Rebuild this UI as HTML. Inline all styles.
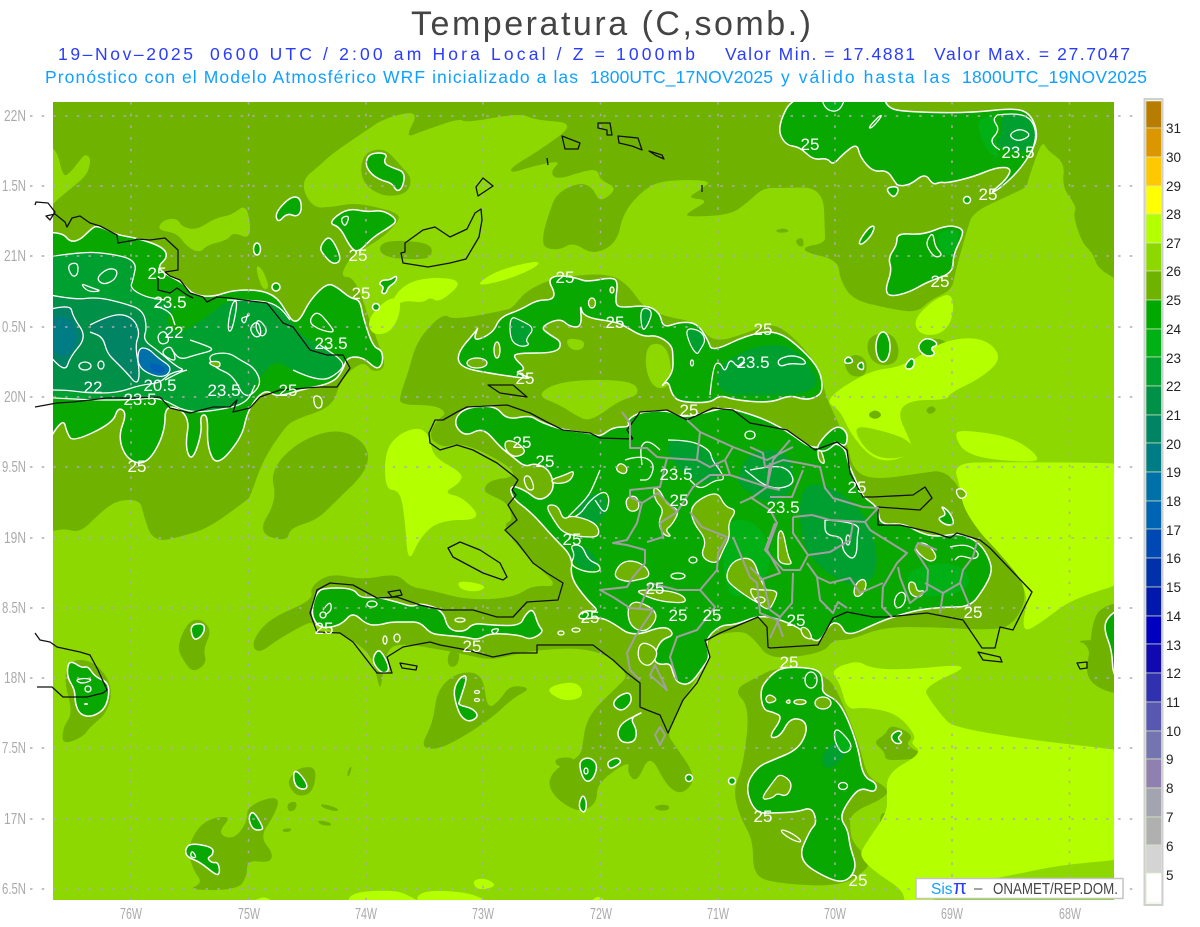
<!DOCTYPE html>
<html><head><meta charset="utf-8"><title>Temperatura</title>
<style>
html,body{margin:0;padding:0;background:#fff;width:1200px;height:927px;overflow:hidden}
svg{display:block}
text{font-family:"Liberation Sans",sans-serif;white-space:pre}
.d{fill:#6fb300}.l{fill:#8cd800}.b{fill:#b4ff00}
.g{fill:#08a800;stroke:#fff;stroke-width:1.5;stroke-linejoin:round}
.h{fill:#6fb300;stroke:#fff;stroke-width:1.3;stroke-linejoin:round}
.w{fill:none;stroke:#fff;stroke-width:1.3;stroke-linejoin:round}
.k{fill:none;stroke:#111;stroke-width:1.3;stroke-linejoin:round}
.p{fill:none;stroke:#a0a0a0;stroke-width:2;stroke-linejoin:round}
.gr{fill:none;stroke:#b0aab4;stroke-width:1.5;stroke-dasharray:2.5 9.2}
.a{fill:#aaa;font-size:15.5px}
.c{fill:#fff;font-size:17px;text-anchor:middle}
.v{fill:#222;font-size:13.5px}
</style></head><body>
<svg width="1200" height="927" viewBox="0 0 1200 927" xmlns="http://www.w3.org/2000/svg">
<rect width="1200" height="927" fill="#fff"/>
<text x="411" y="35" font-size="34" fill="#444" textLength="400" lengthAdjust="spacing">Temperatura (C,somb.)</text>
<g font-size="17.5" fill="#2a3cff">
<text x="58" y="60" textLength="135" lengthAdjust="spacing">19–Nov–2025</text>
<text x="210" y="60" textLength="485" lengthAdjust="spacing">0600 UTC / 2:00 am Hora Local / Z = 1000mb</text>
<text x="725" y="60" textLength="190" lengthAdjust="spacing">Valor Min. = 17.4881</text>
<text x="934" y="60" textLength="196" lengthAdjust="spacing">Valor Max. = 27.7047</text>
</g>
<g font-size="17.5" fill="#10a0ff">
<text x="45" y="83" textLength="533" lengthAdjust="spacing">Pronóstico con el Modelo Atmosférico WRF inicializado a las</text>
<text x="590" y="83" textLength="183" lengthAdjust="spacing">1800UTC_17NOV2025</text>
<text x="781" y="83" textLength="169" lengthAdjust="spacing">y válido hasta las</text>
<text x="962" y="83" textLength="185" lengthAdjust="spacing">1800UTC_19NOV2025</text>
</g>

<rect x="53" y="102" width="1061" height="798" fill="#8cd800"/>
<svg x="53" y="102" width="1061" height="798" viewBox="53 102 1061 798">
<!-- dark band -->
<polygon class="d" points="35,90 40,85 1130,85 1135,90 1135,288 1098,270 1093,253 1082,243 1073,215 1077,207 1062,187 1065,163 1047,150 1042,140 1028,180 1027,187 1010,195 973,212 967,230 955,273 952,290 930,300 917,313 887,308 853,300 840,280 838,260 807,253 803,247 825,243 825,233 823,187 780,188 763,188 747,203 730,215 687,217 687,213 710,200 687,198 700,190 713,180 663,180 643,190 623,213 617,243 593,255 573,242 560,250 543,248 543,233 550,210 557,193 580,182 593,188 600,203 618,188 600,180 598,170 587,170 557,180 550,172 562,160 530,167 512,173 510,168 540,150 577,123 535,120 520,113 465,123 460,118 420,132 405,138 420,110 385,118 367,130 333,153 320,165 300,182 312,208 333,207 353,203 377,207 397,213 400,220 383,237 367,247 350,257 340,277 353,277 363,300 367,313 377,340 387,367 373,373 363,360 340,380 333,407 293,420 283,430 263,460 250,497 247,500 210,527 187,535 153,543 143,513 140,500 117,500 100,513 80,533 63,528 35,536 35,300"/>
<polygon class="d" points="300,440 340,428 368,445 368,470 335,502 317,520 290,528 287,542 257,533 277,500 270,470"/>
<polygon class="d" points="513,307 527,290 557,277 610,273 630,287 643,307 667,317 697,322 713,343 747,333 770,323 790,333 820,367 825,395 837,420 847,443 853,470 873,480 923,473 943,470 960,487 963,507 980,533 997,550 1030,590 1013,627 983,630 933,627 883,627 850,640 833,640 823,653 770,660 755,640 742,630 707,637 710,657 683,700 667,733 673,743 697,777 683,795 667,787 650,753 637,783 627,773 630,760 597,783 597,803 580,813 557,800 547,783 557,767 580,757 583,743 585,727 593,710 617,687 627,677 623,670 607,655 580,648 537,650 513,655 490,660 467,655 443,650 400,643 387,650 383,673 380,693 373,657 353,640 337,633 313,623 307,623 277,640 260,653 252,647 257,633 273,617 313,600 310,587 330,573 363,580 397,573 410,587 430,590 467,600 513,598 533,585 560,587 530,560 507,533 505,523 513,520 508,503 490,495 483,490 490,480 515,477 510,467 480,450 457,443 443,448 428,437 437,420 447,413 435,405 400,405 400,395 408,373 417,340 443,313 453,320 507,310"/>
<polygon class="d" points="777,667 757,677 733,690 750,707 743,767 733,790 740,817 753,840 753,873 770,883 843,887 870,867 867,857 853,843 850,830 850,813 887,797 887,787 867,777 860,747 843,703 827,673"/>
<polygon class="d" points="873,742 885,735 890,725 905,730 913,737 905,745 925,755 922,758 900,760 885,760 885,752"/>
<polygon class="d" points="880,813 887,813 888,825 885,834 880,834"/>
<polygon class="d" points="187,623 200,618 212,630 203,650 207,663 193,673 183,660 177,647"/>
<polygon class="d" points="63,677 73,658 97,663 113,687 107,713 90,727 83,737 62,745 63,727 73,713"/>
<polygon class="d" points="290,777 300,767 317,767 313,793 297,797 288,785"/>
<polygon class="d" points="187,847 203,820 233,815 217,833 233,840 247,823 247,807 270,797 280,800 273,817 260,837 273,853 270,863 247,860 247,877 237,890 187,890 203,883 193,870"/>
<polygon class="d" points="287,803 297,801 296,810 288,812"/><polygon class="d" points="320,803 338,808 338,812 322,808"/><polygon class="d" points="317,820 330,822 332,826 320,825"/><polygon class="d" points="282,829 292,828 290,832 283,832"/><polygon class="d" points="348,770 352,765 350,775 347,777"/>
<polygon class="d" points="420,747 433,723 437,690 457,672 483,673 487,710 500,700 510,685 532,688 513,698 493,717 463,737 437,750"/>
<polygon class="d" points="450,650 460,652 458,665 450,668 447,660"/>
<polygon class="d" points="653,806 668,804 670,810 658,811"/>
<polygon class="d" points="555,758 575,757 572,768 556,766"/>
<polygon class="d" points="870,335 892,332 900,350 895,365 875,365 866,350"/>
<polygon class="d" points="920,345 930,338 947,340 947,356 935,365 920,358"/>
<polygon class="d" points="843,362 855,353 867,360 866,376 850,377"/><polygon class="d" points="905,365 915,357 918,370 908,372"/>
<polygon class="d" points="380,240 430,242 433,256 420,260 380,257"/>
<polygon class="d" points="360,170 365,152 385,148 400,165 412,178 408,192 395,196 380,195 365,185"/>
<polygon class="d" points="1130,600 1100,607 1092,625 1090,650 1085,675 1100,690 1130,696"/>
<polygon class="d" points="1073,640 1090,645 1090,680 1130,698 1130,640"/>
<polygon class="d" points="775,230 785,228 790,232 778,233"/><polygon class="d" points="795,240 803,237 804,247 798,246"/>
<!-- light holes -->
<polygon class="l" points="45,145 57,150 63,177 70,173 80,160 85,154 91,158 88,173 78,183 60,197 45,212"/>
<polygon class="l" points="247,203 252,240 233,232 228,240 207,245 200,253 187,247 177,233 157,230 163,220 177,218 182,227 197,230 215,218 232,215"/>
<polygon class="l" points="255,265 262,268 270,288 262,290"/>
<polygon class="l" points="563,380 633,380 640,395 620,400 590,422 575,415 560,405 535,395"/>
<polygon class="l" points="647,343 668,345 673,385 655,390 645,370"/>
<polygon class="l" points="565,338 585,340 583,350 570,350"/>
<!-- bright -->
<polygon class="b" points="830,670 857,660 870,668 903,670 977,663 923,687 930,700 943,717 953,727 1030,740 1130,751 1135,756 1135,852 1130,859 1060,865 1013,875 960,885 925,905 905,905 903,890 875,872 860,857 863,847 887,813 887,797 887,773 923,753 910,743 917,737 897,713 863,707 847,710 840,683"/>
<polygon class="b" points="823,400 870,370 903,367 943,340 983,337 1003,357 983,377 950,393 947,400 910,400 897,413 910,440 913,453 890,462 870,457 850,433 840,410"/>
<polygon class="b" points="913,320 933,300 953,292 953,320 940,335 920,335"/>
<polygon class="b" points="953,463 1000,462 1130,463 1135,468 1135,575 1130,581 1070,600 1045,620 1020,635 1030,590 997,550 980,533 963,507 960,487"/>
<polygon class="b" points="953,433 965,430 1013,437 1040,457 1033,463 967,457"/>
<polygon class="b" points="385,450 400,433 420,427 430,437 433,457 463,473 460,483 443,493 463,497 483,520 440,520 420,537 408,565 405,520 400,490 385,490"/>
<polygon class="b" points="385,312 407,278 467,278 440,303 430,297 423,303 403,300"/>
<polygon class="b" points="473,287 497,270 540,260 537,267 507,280"/>
<polygon class="b" points="367,320 385,300 400,297 400,315 390,333 372,335"/>
<polygon class="b" points="543,688 577,680 585,697 563,702"/>
<polygon class="b" points="457,580 487,585 480,592 460,590"/>
<polygon class="b" points="473,880 485,878 497,885 485,890 475,888"/><polygon class="b" points="415,905 420,890 470,892 493,905"/><polygon class="b" points="587,908 598,893 610,908"/><polygon class="b" points="243,908 265,894 277,908"/><polygon class="b" points="347,908 350,892 395,890 410,896 430,908"/>
<polygon class="l" points="852,425 880,430 910,440 915,455 885,460 865,450"/>
<polygon class="l" points="900,412 930,400 970,402 985,425 950,432 915,428"/>
<polygon class="d" points="867,415 875,409 883,415 875,420"/><polygon class="d" points="925,410 932,405 937,410 930,415"/>
<!-- Cuba -->
<polygon class="g" points="40,232 63,233 70,242 80,240 90,230 97,225 117,235 137,238 163,247 168,257 157,267 167,275 183,283 193,295 213,297 233,290 260,290 277,297 287,313 293,322 300,320 310,300 327,283 337,287 350,298 360,300 363,317 373,347 382,350 383,363 377,370 363,357 347,357 343,370 333,383 300,390 277,397 267,390 257,397 247,413 242,437 217,467 207,447 208,415 200,415 202,433 192,462 185,447 190,415 165,403 165,433 147,465 127,460 118,437 127,413 118,407 113,423 73,442 67,433 63,417 40,455"/>
<polygon fill="#00a030" points="40,258 80,252 107,253 137,260 133,280 130,288 145,297 165,300 175,310 165,320 175,335 195,325 213,312 227,300 263,300 280,307 300,335 320,345 345,362 340,372 320,383 293,370 275,360 262,375 255,385 247,403 220,410 187,413 160,397 133,400 83,400 40,397"/>
<polyline class="w" points="40,258 80,252 107,253 137,260 133,280 130,288 145,297 165,300"/>
<polyline class="w" points="40,397 83,400 133,400 160,397 187,413 220,410 247,403 255,385"/>
<polyline class="w" points="293,370 320,383 340,372 345,362 320,345"/>
<polyline class="w" points="227,300 263,300 280,307 290,320"/>
<polygon fill="#009048" points="40,293 73,300 97,297 123,303 143,310 147,328 143,340 157,350 177,367 185,370 170,373 160,383 140,385 117,393 87,393 67,390 40,390"/>
<polyline class="w" points="40,293 73,300 97,297 123,303 143,310 147,328 143,340 157,350 177,367 185,370 170,373 160,383 140,385 117,393 87,393 67,390 40,390"/>
<polygon fill="#008464" points="40,312 70,303 73,317 87,337 70,357 65,373 40,345"/>
<polyline class="w" points="40,312 70,303 73,317 87,337 70,357 65,373 40,345"/>
<polygon fill="#008464" points="90,325 113,313 133,317 140,333 135,345 140,373 137,385 127,373 117,363 107,353 103,337 90,332"/>
<polyline class="w" points="90,325 113,313 133,317 140,333 135,345 140,373 137,385 127,373 117,363 107,353 103,337 90,332"/>
<polygon fill="#007c84" points="45,320 70,315 80,340 65,360 45,345"/>
<polygon fill="#0070a8" stroke="#fff" stroke-width="1.2" points="138,348 148,348 158,358 173,368 163,379 138,369"/>
<polygon fill="#0060b8" points="150,362 162,366 166,370 160,374 150,370"/>
<polygon class="w" points="157,335 165,330 170,342 160,345"/>
<polyline class="w" points="165,380 180,372 187,370"/>
<ellipse class="w" cx="85" cy="366" rx="6" ry="4"/><ellipse class="w" cx="101" cy="365" rx="3" ry="4"/>
<polygon class="w" points="67,265 78,262 78,275 72,277"/>
<polygon class="w" points="96,278 108,268 118,270 115,280 103,285"/>
<polygon class="w" points="80,283 92,288 102,291 88,292"/>
<polyline class="w" points="155,306 170,310 175,325"/>
<polyline class="w" points="190,340 205,345 215,350 195,355 180,360 172,350"/>
<polygon class="w" points="160,353 170,345 175,355 175,362"/>
<polygon class="w" points="207,355 228,352 240,360 255,368 262,385 245,400 233,375 215,368"/>
<polygon class="h" points="207,362 220,361 220,367 215,367"/>
<polygon class="w" points="232,302 238,300 232,332 227,330"/>
<polygon class="w" points="245,325 248,312 250,316 240,318"/>
<polygon class="w" points="249,328 258,320 262,335 255,338"/>
<polygon class="w" points="258,318 268,330 262,338 255,328"/>
<polygon class="w" points="308,322 317,310 330,325 335,333 320,330"/>
<polygon class="h" points="313,395 322,397 322,408 315,408"/>
<polygon class="g" points="382,280 390,280 397,275 396,282 388,287 386,294 381,293 384,287 379,284"/>
<!-- northern islets -->
<polygon class="g" points="365,163 370,153 388,153 383,163 393,168 405,172 403,187 397,192 392,183 380,180 370,173"/>
<polygon class="g" points="275,213 290,197 300,197 302,210 297,217 287,213 278,223"/>
<ellipse class="g" cx="257" cy="249" rx="3.5" ry="6"/>
<polygon class="g" points="320,247 327,237 333,240 342,260 333,265 322,253"/>
<polygon class="g" points="328,223 347,208 367,212 383,210 398,220 390,227 373,237 358,253 350,247 340,227"/>
<polygon class="w" points="340,218 350,215 345,228"/>
<circle class="g" cx="276" cy="287" r="4"/><circle class="g" cx="376" cy="307" r="3.5"/>
<!-- NE large -->
<polygon class="g" points="795,92 777,127 785,145 800,147 813,160 827,158 833,165 842,155 857,143 860,157 873,172 887,170 895,182 898,186 910,185 925,173 933,185 940,182 947,183 973,177 997,167 1012,168 1006,180 990,193 998,190 1018,172 1033,150 1038,133 1030,113 1013,108 970,113 907,112 887,108 883,92"/>
<polygon fill="#00a030" points="1000,117 1013,113 1030,117 1036,133 1031,152 1003,150 995,143 1003,132"/>
<polygon fill="#00b014" points="975,118 1000,116 995,143 1000,160 985,150"/>
<polyline class="w" points="997,115 1013,113 1030,117 1037,133 1032,152"/>
<polyline class="w" points="1000,150 988,143 1000,130 993,120 997,115"/>
<polygon class="w" points="1008,135 1020,128 1032,135 1018,142"/>
<polygon class="w" points="868,128 880,115 882,116 872,128"/>
<polygon fill="#00b014" stroke="#fff" stroke-width="1.2" points="820,92 825,110 840,112 847,92"/>
<polygon class="g" points="885,188 898,186 898,193 893,198"/>
<polygon class="g" points="885,290 892,270 888,258 897,245 897,233 923,235 947,225 962,228 963,235 953,255 953,273 927,282 910,292 890,297"/>
<polygon fill="#00b014" points="935,232 962,228 953,255 942,255"/>
<polygon class="w" points="927,240 933,232 935,247 943,255 935,258 927,247"/>
<polygon class="g" points="858,243 868,228 875,225 872,235 862,245"/>
<circle class="g" cx="967" cy="200" r="3.5"/>
<ellipse class="g" cx="883" cy="347" rx="7" ry="15"/>
<polygon class="g" points="918,345 925,338 934,340 938,345 930,348 936,354 928,357 920,352"/>
<polygon class="g" points="844,360 849,356 854,362 846,364"/><polygon class="g" points="857,365 863,361 864,370 859,369"/><polygon class="g" points="905,365 912,357 915,363 912,369 906,369"/>
<!-- central north -->
<polygon class="g" points="457,353 477,330 478,327 473,342 493,333 500,317 520,310 537,300 552,300 555,293 548,280 557,275 577,278 587,282 613,277 618,283 615,303 620,308 647,305 660,313 663,328 680,322 697,323 708,340 712,352 747,335 777,330 803,350 820,370 823,390 817,397 805,400 790,395 770,403 735,400 720,395 710,403 680,402 672,395 668,380 660,388 673,373 673,357 672,345 657,335 643,337 623,325 615,322 583,317 580,303 582,327 570,327 560,318 540,327 550,335 562,342 557,353 517,353 513,357 527,370 513,372 537,380 487,373 460,367"/>
<polygon fill="#00a030" stroke="#fff" stroke-width="1.2" points="510,316 520,320 535,328 525,340 530,345 520,347 510,340"/>
<polygon fill="#00a030" stroke="#fff" stroke-width="1.2" points="640,307 653,310 648,325 642,332"/>
<polygon fill="#00a030" stroke="#fff" stroke-width="1.2" points="685,328 700,330 706,340 700,350 697,355 690,345"/>
<polygon fill="#00a030" points="715,370 735,355 760,345 790,345 810,365 820,385 800,395 760,395 720,395"/>
<polyline class="w" points="710,395 713,365 720,362 725,373 730,358 738,368 745,362"/>
<polygon class="w" points="777,360 790,355 803,358 807,365 790,363 780,367"/>
<ellipse class="h" cx="477" cy="363" rx="10" ry="5"/><ellipse class="h" cx="497" cy="350" rx="3" ry="8"/><ellipse class="h" cx="592" cy="303" rx="3.5" ry="5"/><ellipse class="h" cx="612" cy="290" rx="2" ry="3"/><ellipse class="w" cx="692" cy="363" rx="1.5" ry="3"/>
<!-- main island -->
<polygon class="g" points="453,423 463,408 495,405 507,420 530,415 540,422 563,430 590,433 600,437 613,427 630,427 627,420 640,412 667,410 683,418 707,412 723,408 737,410 767,420 790,433 813,450 830,442 845,447 848,463 857,483 863,497 878,507 880,525 903,523 920,533 937,537 960,533 980,543 990,560 992,573 983,590 970,607 943,607 917,610 893,617 877,623 847,637 840,623 830,623 818,645 803,630 782,620 760,615 735,625 720,625 705,640 710,657 703,667 690,685 677,683 673,673 670,663 660,665 653,660 660,640 675,635 665,625 633,637 613,623 600,617 577,620 582,610 600,612 587,600 570,577 573,557 553,537 532,513 512,498 510,485 525,490 540,502 555,490 550,470 535,463 525,467 513,457 500,447 483,427 465,437"/>
<polygon fill="#00a030" points="668,440 690,440 720,460 720,478 700,485 680,470 668,455"/>
<polygon fill="#00a030" points="750,450 790,450 795,490 770,505 745,490 735,480"/>
<polygon fill="#00a030" points="800,480 840,490 870,520 880,570 860,590 820,570 800,540"/>
<polygon fill="#00a030" points="580,500 600,490 610,510 590,530 575,520"/>
<polygon fill="#00a030" points="570,545 590,548 600,565 590,572 575,565"/>
<polygon fill="#00b014" points="720,520 760,520 775,570 740,600 725,590"/>
<polygon fill="#00b014" points="900,570 960,560 975,590 920,600"/>
<polygon class="w" points="570,545 582,545 588,560 600,565 600,572 585,572 570,565 575,555"/>
<polyline class="w" points="600,470 592,490 585,500 575,510 565,520 580,515 590,500 605,490 610,500 605,515 595,500"/>
<polyline class="w" points="668,440 690,440 710,450 712,460 720,470 725,480 715,480 700,490 690,480"/>
<polyline class="w" points="625,460 640,455 655,463 650,480 640,480"/>
<polyline class="w" points="750,470 775,465 790,470 795,485 770,490 745,470"/>
<polygon class="h" points="545,505 558,505 563,520 572,515 597,523 600,537 582,537 563,533 555,522"/>
<polygon class="h" points="690,505 717,490 725,507 737,510 728,523 730,537 723,550 717,565 700,557 707,540 693,523"/>
<polygon class="h" points="620,563 633,560 647,567 650,577 637,580 627,582 613,577"/>
<polygon class="h" points="633,590 665,590 683,595 687,603 665,602 650,598"/>
<polygon class="h" points="725,577 733,560 753,557 760,580 773,600 763,607 733,587"/>
<polygon class="h" points="627,607 637,600 660,613 647,633 630,627"/>
<polygon class="h" points="653,487 660,490 667,505 680,510 672,525 665,530 672,537 663,535 658,522 664,510 655,500"/>
<polygon class="h" points="778,532 783,530 788,557 793,565 778,563 778,550"/>
<polygon class="h" points="917,543 927,543 938,557 930,563 915,550"/>
<polygon class="h" points="908,582 915,582 917,592 925,590 920,598 910,595"/>
<polygon class="h" points="750,588 757,590 778,590 775,600 768,612 752,597"/>
<polygon class="h" points="800,627 808,628 813,640 803,637"/>
<polygon class="h" points="640,640 660,650 650,668 637,660"/>
<polygon class="h" points="505,440 517,442 527,452 515,458 505,450"/>
<polygon class="h" points="523,477 530,475 535,490 527,490"/>
<polygon class="h" points="550,480 565,475 575,470 570,482 555,484"/>
<polygon class="h" points="620,462 628,468 625,475 615,470"/>
<polygon class="h" points="625,498 637,495 640,510 628,512"/>
<polyline class="w" points="825,520 860,522 857,537 857,553 852,560 842,550 843,537 825,535 825,520"/>
<polyline class="w" points="950,547 965,543 980,553 975,560 960,555 955,560"/>
<ellipse class="w" cx="760" cy="600" rx="5" ry="3"/><ellipse class="w" cx="678" cy="576" rx="7" ry="3"/><ellipse class="w" cx="693" cy="560" rx="4" ry="3"/><ellipse class="w" cx="750" cy="435" rx="5" ry="4"/><ellipse class="w" cx="900" cy="600" rx="5" ry="8" transform="rotate(20 900 600)"/><ellipse class="h" cx="860" cy="588" rx="5" ry="9" transform="rotate(25 860 588)"/><ellipse class="w" cx="848" cy="540" rx="2" ry="5"/><ellipse class="w" cx="576" cy="630" rx="4" ry="2"/><ellipse class="w" cx="561" cy="633" rx="3" ry="2"/>
<polygon class="h" points="818,445 823,455 825,465 818,460"/>
<polyline class="w" points="660,450 650,440 640,445 642,465"/>
<polygon class="g" points="838,425 848,433 846,447 837,442 826,452 815,450 825,435"/>
<polygon class="h" points="955,490 962,488 968,495 960,500"/>
<polygon class="g" points="940,505 950,512 955,525 945,525 937,518 947,515"/>
<!-- southern peninsula -->
<polygon class="g" points="313,603 317,593 323,588 353,588 360,598 377,597 397,602 413,607 420,603 443,610 448,630 465,632 473,623 490,625 520,626 525,615 533,608 538,625 544,632 530,640 520,635 490,633 478,640 465,637 440,635 430,633 420,622 407,622 390,622 380,625 367,625 353,612 343,623 333,627 320,628 312,617"/>
<polyline class="w" points="323,610 330,600 332,610 325,615"/><circle class="w" cx="323" cy="615" r="3"/><ellipse class="w" cx="372" cy="604" rx="5" ry="3"/><ellipse class="w" cx="385" cy="640" rx="2" ry="4"/><ellipse class="w" cx="397" cy="638" rx="3" ry="4"/>
<polygon class="g" points="377,650 382,652 390,668 385,674 378,670 372,660"/>
<polygon class="w" points="490,630 500,628 495,635"/>
<ellipse class="w" cx="460" cy="620" rx="5" ry="2"/>
<!-- beata ridge -->
<polygon class="g" points="780,668 800,667 820,670 823,683 822,693 837,700 847,717 858,747 863,777 877,783 875,793 860,787 847,803 840,818 848,830 850,847 857,867 847,882 830,880 797,860 810,830 817,823 812,807 797,812 773,813 755,813 745,787 757,767 773,760 797,750 807,733 805,720 790,718 780,737 768,738 783,717 773,712 763,710 760,690 768,678"/>
<polygon fill="#00a030" points="820,755 842,735 848,755 826,772"/>
<ellipse class="w" cx="811" cy="680" rx="6" ry="8"/>
<ellipse class="h" cx="823" cy="703" rx="8" ry="6"/>
<ellipse class="h" cx="800" cy="702" rx="6" ry="2.5"/>
<polygon class="h" points="765,698 770,694 778,700 768,704"/>
<polygon class="h" points="785,702 790,699 790,704"/>
<polygon fill="#00b014" stroke="#fff" stroke-width="1.3" points="834,730 840,730 854,747 843,755 835,743"/>
<polygon class="h" points="760,800 773,782 780,773 793,783 787,797 777,793 773,798"/>
<ellipse class="w" cx="843" cy="786" rx="4.5" ry="3.5"/>
<ellipse class="h" cx="791" cy="836" rx="11" ry="2.5" transform="rotate(30 791 836)"/>
<polygon class="g" points="890,736 898,730 903,733 897,738 903,743 895,744"/>
<!-- west / south islets -->
<polygon class="g" points="68,663 73,662 82,668 88,666 95,677 110,683 107,707 93,717 80,715 75,703 75,690 67,677"/>
<polygon class="w" points="75,680 85,678 93,680 82,684"/><circle class="w" cx="88" cy="689" r="3"/><ellipse fill="#fff" cx="86" cy="704" rx="2" ry="1"/>
<polygon class="g" points="190,625 203,623 205,630 200,638 193,640"/>
<polygon class="g" points="293,772 298,771 308,785 305,790 295,787"/>
<polygon class="g" points="248,818 253,810 263,827 262,830 253,830"/>
<polygon class="g" points="185,850 190,843 213,847 213,855 207,858 212,863 218,862 220,872 217,876 200,862 187,857"/>
<polygon class="w" points="192,850 197,858 190,857"/>
<polygon class="g" points="453,690 460,677 468,675 460,700 458,705 472,708 479,716 470,722 462,718 457,708"/>
<ellipse class="w" cx="477" cy="692" rx="2.5" ry="1.5"/><ellipse class="w" cx="477" cy="700" rx="2.5" ry="1.5"/>
<polygon class="g" points="613,702 620,695 630,692 632,702 623,711 615,708"/>
<polygon class="g" points="618,730 623,722 637,715 643,712 630,718 637,730 635,742 623,743 618,737"/>
<polygon class="g" points="580,760 590,757 598,765 593,780 585,782 580,770"/><ellipse class="w" cx="586" cy="771" rx="2" ry="3"/>
<polygon class="g" points="607,762 617,757 622,762 613,768 609,768"/>
<polygon class="g" points="579,803 583,794 587,803 585,813 580,810"/>
<circle class="g" cx="689" cy="778" r="3.5"/><circle class="g" cx="732" cy="781" r="3.5"/>
<polygon class="g" points="1125,605 1107,617 1104,630 1112,650 1113,677 1125,680"/>
</svg>
<!-- grid lines extended past the plot -->
<path class="gr" d="M30 116H1140M30 186H1140M30 256H1140M30 327H1140M30 397H1140M30 467H1140M30 538H1140M30 608H1140M30 678H1140M30 748H1140M30 819H1140M30 889H1140M131 102V906M248.5 102V906M366 102V906M483 102V906M600.5 102V906M718 102V906M835 102V906M952 102V906M1069.5 102V906"/>
<!-- coastlines -->
<polyline class="k" points="35,205 36,202 48,203 55,212 50,220 46,216 55,214 65,222 67,227 72,218 80,216 90,223 100,226 117,235 118,243 135,240 137,239 150,240 165,238 178,250 178,270 165,272 170,276 180,280 190,293 203,297 207,302 217,297 230,298 243,300 267,303 283,323 293,327 310,350 327,355 343,355 350,368 337,387 320,387 280,390 260,397 250,408 233,412 237,400 230,407 213,407 190,413 170,408 160,397 133,398 107,398 90,400 73,402 57,403 35,407"/>
<polyline class="k" points="158,278 158,290 170,293 177,288 187,295 193,298"/>
<polygon class="k" points="476,187 483,178 493,186 478,196"/>
<polygon class="k" points="405,243 423,230 435,227 450,237 467,229 475,213 481,209 482,220 479,237 466,259 450,263 428,267 403,263 401,253 405,252"/>
<polygon class="k" points="562,136 580,143 578,149 565,149"/>
<polygon class="k" points="598,123 610,123 612,135 607,135 607,130 598,128"/>
<polygon class="k" points="618,136 638,138 642,150 632,146 619,143"/>
<polygon class="k" points="649,151 662,155 664,159 655,155"/>
<polyline class="k" points="547,158 548,165"/><polyline class="k" points="702,185 702,192"/>
<polygon class="k" points="488,385 513,385 527,397 500,393"/>
<polyline class="k" points="633,439 600,438 590,433 563,430 547,422 530,413 507,405 467,407 457,412 443,420 435,420 429,433 430,443 440,450 457,445 473,450 497,463 515,477 518,480 512,490 516,495 508,505 517,520 505,530 517,542 533,563 547,573 563,583 558,600 527,602 513,617 497,617 473,610 443,610 420,605 397,597 377,598 353,585 330,583 317,590 310,613 317,632 340,633 353,642 377,673 392,673 387,657 403,647 430,642 440,645 467,650 493,657 513,653 537,653 537,645 593,645 613,660 627,673 640,683 640,707 647,710 660,715 668,733 683,700 697,683 710,657 705,640 707,640 720,633 758,617 767,627 768,647 770,648 818,645 833,618 847,612 873,617 887,617 927,613 963,620 982,648 995,648 1000,627 1013,630 1032,592 990,548 980,540 957,533 950,538 935,533 900,525 878,525 878,507 920,510 932,498 925,487 913,495 873,497 863,497 850,473 847,450 837,442 815,450 787,430 750,423 733,410 713,408 687,420 667,410 640,412 627,430 633,439"/>
<polygon class="k" points="978,652 1000,657 1002,662 983,660"/>
<polygon class="k" points="448,548 460,542 480,550 500,563 507,577 503,580 483,573 453,557"/>
<polygon class="k" points="388,592 400,590 402,595 392,597"/>
<polygon class="k" points="400,663 417,666 416,670 402,668"/>
<polyline class="k" points="35,633 40,640 50,642 57,647 80,652 90,655 98,670 107,690 103,693 87,697 75,697 63,697 52,687 37,687"/>
<polygon class="k" points="1077,663 1087,662 1087,668 1080,669"/>
<!-- province lines -->
<polyline class="p" points="622,412 630,423 630,448 647,448 657,457 667,458 660,487 630,490 630,497 642,503 637,523 627,540 613,543 627,545 645,550 645,563 633,577 627,587 600,590 613,597 630,608 653,610 635,637 627,653 630,670 640,680"/>
<polyline class="p" points="687,420 700,432 697,460 710,467 725,460 733,447 700,432"/>
<polyline class="p" points="667,458 697,460"/>
<polyline class="p" points="733,447 767,460 793,447"/>
<polyline class="p" points="725,460 730,475 710,475 693,487 677,512 658,493 642,503"/>
<polyline class="p" points="677,512 660,523 663,537 647,542"/>
<polyline class="p" points="690,512 702,527 727,537 718,553 717,570 700,590 677,590 650,583 640,607"/>
<polyline class="p" points="700,590 715,607 697,630 677,637 670,657 677,680"/>
<polyline class="p" points="733,537 750,577 757,583 760,613 777,620 783,637"/>
<polyline class="p" points="750,497 770,510 777,523 767,550 780,573 760,580"/>
<polyline class="p" points="730,475 767,487 753,497 740,503"/>
<polyline class="p" points="770,463 767,487 780,490"/>
<polyline class="p" points="750,447 763,453 765,467 783,460 800,463 820,467 825,488 833,498 863,507 878,508 865,522 870,530 907,553 897,563 883,587 882,607 892,617"/>
<polyline class="p" points="790,440 773,460 767,487"/>
<polyline class="p" points="803,470 792,497 770,497"/>
<polyline class="p" points="793,517 812,515 830,520 865,522"/>
<polyline class="p" points="775,523 765,550 783,570 800,570 808,555 793,533 793,517"/>
<polyline class="p" points="808,555 830,552 850,540 853,523"/>
<polyline class="p" points="807,563 817,577 830,583 850,578 860,593 883,583"/>
<polyline class="p" points="793,573 792,603 780,617 770,638"/>
<polyline class="p" points="817,577 820,600 833,613 838,602 847,608"/>
<polyline class="p" points="898,567 900,577 910,603 927,590 928,570 915,550 918,543 930,547 937,550"/>
<polyline class="p" points="925,583 943,593 940,613"/>
<polyline class="p" points="943,593 960,583 963,570 973,557 977,542"/>
<polyline class="p" points="960,583 970,607"/>
<polyline class="p" points="750,567 763,580 770,610 780,617"/>
<polygon class="p" points="655,735 660,727 665,735 660,745"/>
<polygon class="p" points="667,690 650,675 655,665"/>
<!-- contour labels -->
<g class="c">
<text x="810" y="150">25</text><text x="1018" y="158">23.5</text><text x="988" y="200">25</text><text x="940" y="287">25</text>
<text x="157" y="279">25</text><text x="358" y="261">25</text><text x="361" y="299">25</text><text x="565" y="283">25</text><text x="615" y="328">25</text><text x="763" y="335">25</text>
<text x="170" y="308">23.5</text><text x="174" y="338">22</text><text x="331" y="349">23.5</text><text x="753" y="368">23.5</text><text x="525" y="384">25</text>
<text x="93" y="393">22</text><text x="160" y="391">20.5</text><text x="140" y="405">23.5</text><text x="224" y="396">23.5</text><text x="288" y="396">25</text>
<text x="689" y="416">25</text><text x="522" y="448">25</text><text x="545" y="467">25</text><text x="137" y="472">25</text><text x="676" y="480">23.5</text><text x="857" y="493">25</text>
<text x="783" y="513">23.5</text><text x="679" y="506">25</text><text x="572" y="545">25</text><text x="655" y="594">25</text><text x="678" y="621">25</text><text x="712" y="621">25</text><text x="796" y="626">25</text>
<text x="590" y="623">25</text><text x="973" y="618">25</text><text x="324" y="634">25</text><text x="472" y="652">25</text><text x="789" y="668">25</text><text x="763" y="822">25</text><text x="858" y="886">25</text>
</g>
<!-- axis labels -->
<g class="a">
<text x="4" y="121" textLength="22" lengthAdjust="spacingAndGlyphs">22N</text><text x="2" y="191" textLength="24" lengthAdjust="spacingAndGlyphs">1.5N</text><text x="4" y="261" textLength="22" lengthAdjust="spacingAndGlyphs">21N</text><text x="2" y="332" textLength="24" lengthAdjust="spacingAndGlyphs">0.5N</text><text x="4" y="402" textLength="22" lengthAdjust="spacingAndGlyphs">20N</text><text x="2" y="472" textLength="24" lengthAdjust="spacingAndGlyphs">9.5N</text><text x="4" y="543" textLength="22" lengthAdjust="spacingAndGlyphs">19N</text><text x="2" y="613" textLength="24" lengthAdjust="spacingAndGlyphs">8.5N</text><text x="4" y="683" textLength="22" lengthAdjust="spacingAndGlyphs">18N</text><text x="2" y="753" textLength="24" lengthAdjust="spacingAndGlyphs">7.5N</text><text x="4" y="824" textLength="22" lengthAdjust="spacingAndGlyphs">17N</text><text x="2" y="894" textLength="24" lengthAdjust="spacingAndGlyphs">6.5N</text>
<text x="120" y="919" textLength="22" lengthAdjust="spacingAndGlyphs">76W</text><text x="238" y="919" textLength="22" lengthAdjust="spacingAndGlyphs">75W</text><text x="355" y="919" textLength="22" lengthAdjust="spacingAndGlyphs">74W</text><text x="472" y="919" textLength="22" lengthAdjust="spacingAndGlyphs">73W</text><text x="590" y="919" textLength="22" lengthAdjust="spacingAndGlyphs">72W</text><text x="707" y="919" textLength="22" lengthAdjust="spacingAndGlyphs">71W</text><text x="824" y="919" textLength="22" lengthAdjust="spacingAndGlyphs">70W</text><text x="941" y="919" textLength="22" lengthAdjust="spacingAndGlyphs">69W</text><text x="1059" y="919" textLength="22" lengthAdjust="spacingAndGlyphs">68W</text>
</g>
<!-- credit box -->
<rect x="916" y="878.5" width="207" height="20" fill="#fff" stroke="#c4c4c4" stroke-width="1.5"/>
<text x="931" y="894" font-size="15.5" fill="#10a0ff">Sis</text>
<text x="953" y="894" font-size="20" fill="#2a3cff" font-family="DejaVu Sans">π</text>
<text x="974" y="893" font-size="15" fill="#444">–</text>
<text x="993" y="894" font-size="15.5" fill="#444" textLength="125" lengthAdjust="spacingAndGlyphs">ONAMET/REP.DOM.</text>
<!-- colour bar -->
<rect x="1144.5" y="99" width="18" height="806" fill="#fff" stroke="#cfcfcf" stroke-width="2"/>
<g stroke="#d8e8c0" stroke-width=".7">
<rect x="1146" y="101" width="15.5" height="27" fill="#b87c00"/><rect x="1146" y="128" width="15.5" height="29" fill="#dc9600"/><rect x="1146" y="157" width="15.5" height="29" fill="#ffc800"/><rect x="1146" y="186" width="15.5" height="28" fill="#ffff00"/><rect x="1146" y="214" width="15.5" height="29" fill="#b4ff00"/><rect x="1146" y="243" width="15.5" height="28" fill="#8cd800"/><rect x="1146" y="271" width="15.5" height="29" fill="#6fb300"/><rect x="1146" y="300" width="15.5" height="29" fill="#00a800"/><rect x="1146" y="329" width="15.5" height="28" fill="#00b014"/><rect x="1146" y="357" width="15.5" height="29" fill="#00a030"/><rect x="1146" y="386" width="15.5" height="29" fill="#009048"/><rect x="1146" y="415" width="15.5" height="28" fill="#008464"/><rect x="1146" y="443" width="15.5" height="29" fill="#007c84"/><rect x="1146" y="472" width="15.5" height="29" fill="#0070a8"/><rect x="1146" y="501" width="15.5" height="28" fill="#0064b4"/><rect x="1146" y="529" width="15.5" height="29" fill="#0048b4"/><rect x="1146" y="558" width="15.5" height="29" fill="#0030ac"/><rect x="1146" y="587" width="15.5" height="29" fill="#0018ac"/><rect x="1146" y="616" width="15.5" height="28" fill="#0000c0"/><rect x="1146" y="644" width="15.5" height="29" fill="#1008b0"/><rect x="1146" y="673" width="15.5" height="29" fill="#3030b0"/><rect x="1146" y="702" width="15.5" height="29" fill="#5858b0"/><rect x="1146" y="731" width="15.5" height="28" fill="#7474b0"/><rect x="1146" y="759" width="15.5" height="29" fill="#9080b0"/><rect x="1146" y="788" width="15.5" height="29" fill="#a4a4b0"/><rect x="1146" y="817" width="15.5" height="28" fill="#b0b0b0"/><rect x="1146" y="845" width="15.5" height="28" fill="#d4d4d4"/><rect x="1146" y="873" width="15.5" height="30" fill="#fff"/>
</g>
<g class="v">
<text x="1166" y="133">31</text><text x="1166" y="162">30</text><text x="1166" y="191">29</text><text x="1166" y="219">28</text><text x="1166" y="248">27</text><text x="1166" y="276">26</text><text x="1166" y="305">25</text><text x="1166" y="334">24</text><text x="1166" y="363">23</text><text x="1166" y="391">22</text><text x="1166" y="420">21</text><text x="1166" y="449">20</text><text x="1166" y="477">19</text><text x="1166" y="506">18</text><text x="1166" y="535">17</text><text x="1166" y="563">16</text><text x="1166" y="592">15</text><text x="1166" y="621">14</text><text x="1166" y="650">13</text><text x="1166" y="678">12</text><text x="1166" y="707">11</text><text x="1166" y="736">10</text><text x="1166" y="764">9</text><text x="1166" y="793">8</text><text x="1166" y="822">7</text><text x="1166" y="851">6</text><text x="1166" y="880">5</text>
</g>
</svg>
<script>
/* round the hand-traced contour polygons into smooth curves */
document.querySelectorAll('polygon,polyline.w').forEach(function(e){
  var c=e.classList;
  if(c.contains('k')||c.contains('p'))return;
  var n=e.getAttribute('points').trim().split(/\s+/).map(function(s){return s.split(',').map(Number)});
  if(n.length<3)return;
  var closed=e.tagName.toLowerCase()==='polygon',d='',i,m=function(a,b){return ((a[0]+b[0])/2)+' '+((a[1]+b[1])/2)};
  if(closed){
    d='M'+m(n[n.length-1],n[0]);
    for(i=0;i<n.length;i++)d+='Q'+n[i][0]+' '+n[i][1]+' '+m(n[i],n[(i+1)%n.length]);
    d+='Z';
  }else{
    d='M'+n[0][0]+' '+n[0][1];
    for(i=1;i<n.length-1;i++)d+='Q'+n[i][0]+' '+n[i][1]+' '+m(n[i],n[i+1]);
    d+='L'+n[n.length-1][0]+' '+n[n.length-1][1];
  }
  var p=document.createElementNS('http://www.w3.org/2000/svg','path');
  for(i=0;i<e.attributes.length;i++){var a=e.attributes[i];if(a.name!=='points')p.setAttribute(a.name,a.value)}
  p.setAttribute('d',d);
  e.parentNode.replaceChild(p,e);
});
</script>
</body></html>
